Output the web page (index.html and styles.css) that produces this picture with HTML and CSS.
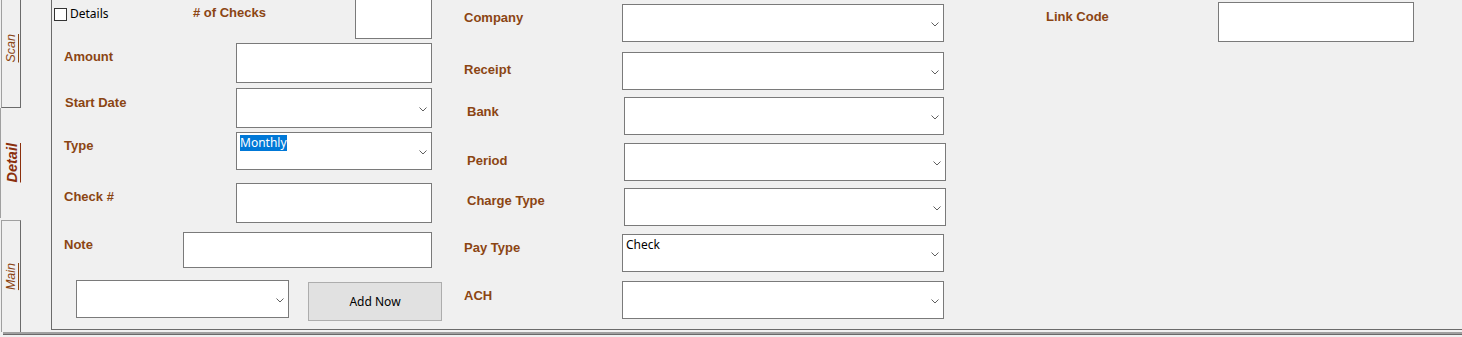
FILE: index.html
```html
<!DOCTYPE html>
<html>
<head>
<meta charset="utf-8">
<link rel="stylesheet" href="styles.css">
</head>
<body>
<div class="root">
  <div class="tabctl">
    <div class="tabs">
      <div class="tab tab-scan"><span class="tab-text">Scan</span></div>
      <div class="tab tab-sel"><span class="tab-text tab-text-sel">Detail</span></div>
      <div class="tab tab-main"><span class="tab-text">Main</span></div>
    </div>
    <div class="page">
      <div class="frame">
        <div class="col col-left">
          <div class="row r1">
            <label class="chk"><span class="chk-box"></span><span class="chk-text">Details</span></label>
            <span class="lbl lbl-checks"># of Checks</span>
            <div class="tb tb-checks"></div>
          </div>
          <div class="row r2">
            <span class="lbl l-amount">Amount</span>
            <div class="tb tb-left"></div>
          </div>
          <div class="row r3">
            <span class="lbl l-start">Start Date</span>
            <div class="cb cb-left h40"><span class="cb-text"></span><svg class="arrow" width="8" height="5" viewBox="0 0 8 5"><path d="M0.5 0.5 L4 4 L7.5 0.5" fill="none" stroke="#606060" stroke-width="1"/></svg></div>
          </div>
          <div class="row r4">
            <span class="lbl l-type">Type</span>
            <div class="cb cb-left h38"><span class="cb-text"><span class="sel-text">Monthly</span></span><svg class="arrow" width="8" height="5" viewBox="0 0 8 5"><path d="M0.5 0.5 L4 4 L7.5 0.5" fill="none" stroke="#606060" stroke-width="1"/></svg></div>
          </div>
          <div class="row r5">
            <span class="lbl l-check">Check #</span>
            <div class="tb tb-left"></div>
          </div>
          <div class="row r6">
            <span class="lbl l-note">Note</span>
            <div class="tb tb-note"></div>
          </div>
          <div class="row r7">
            <div class="cb cb-bottom"><span class="cb-text"></span><svg class="arrow" width="8" height="5" viewBox="0 0 8 5"><path d="M0.5 0.5 L4 4 L7.5 0.5" fill="none" stroke="#606060" stroke-width="1"/></svg></div>
            <button class="btn">Add Now</button>
          </div>
        </div>
        <div class="col col-mid">
          <div class="row m1">
            <span class="lbl ml9 mt5">Company</span>
            <div class="cb cb-mid"><span class="cb-text"></span><svg class="arrow" width="8" height="5" viewBox="0 0 8 5"><path d="M0.5 0.5 L4 4 L7.5 0.5" fill="none" stroke="#606060" stroke-width="1"/></svg></div>
          </div>
          <div class="row m2">
            <span class="lbl ml9 mt9">Receipt</span>
            <div class="cb cb-mid"><span class="cb-text"></span><svg class="arrow" width="8" height="5" viewBox="0 0 8 5"><path d="M0.5 0.5 L4 4 L7.5 0.5" fill="none" stroke="#606060" stroke-width="1"/></svg></div>
          </div>
          <div class="row m3">
            <span class="lbl ml12 mt6">Bank</span>
            <div class="cb cb-mid cb-narrow"><span class="cb-text"></span><svg class="arrow" width="8" height="5" viewBox="0 0 8 5"><path d="M0.5 0.5 L4 4 L7.5 0.5" fill="none" stroke="#606060" stroke-width="1"/></svg></div>
          </div>
          <div class="row m4">
            <span class="lbl ml12 mt9">Period</span>
            <div class="cb cb-mid"><span class="cb-text"></span><svg class="arrow" width="8" height="5" viewBox="0 0 8 5"><path d="M0.5 0.5 L4 4 L7.5 0.5" fill="none" stroke="#606060" stroke-width="1"/></svg></div>
          </div>
          <div class="row m5">
            <span class="lbl ml12 mt4">Charge Type</span>
            <div class="cb cb-mid"><span class="cb-text"></span><svg class="arrow" width="8" height="5" viewBox="0 0 8 5"><path d="M0.5 0.5 L4 4 L7.5 0.5" fill="none" stroke="#606060" stroke-width="1"/></svg></div>
          </div>
          <div class="row m6">
            <span class="lbl ml9 mt5">Pay Type</span>
            <div class="cb cb-mid"><span class="cb-text">Check</span><svg class="arrow" width="8" height="5" viewBox="0 0 8 5"><path d="M0.5 0.5 L4 4 L7.5 0.5" fill="none" stroke="#606060" stroke-width="1"/></svg></div>
          </div>
          <div class="row m7">
            <span class="lbl ml9 mt6">ACH</span>
            <div class="cb cb-mid h39"><span class="cb-text"></span><svg class="arrow" width="8" height="5" viewBox="0 0 8 5"><path d="M0.5 0.5 L4 4 L7.5 0.5" fill="none" stroke="#606060" stroke-width="1"/></svg></div>
          </div>
        </div>
        <div class="col col-right">
          <div class="row">
            <span class="lbl l-link">Link Code</span>
            <div class="tb tb-left"></div>
          </div>
        </div>
      </div>
    </div>
  </div>
  <div class="edge"></div>
</div>
</body>
</html>
```

FILE: styles.css
```css
html, body {
  margin: 0;
  padding: 0;
}
body {
  background: #f0f0f0;
  width: 1462px;
  height: 337px;
  overflow: hidden;
  font-family: "Liberation Sans", Arial, sans-serif;
}
.root {
  height: 337px;
  display: flex;
  flex-direction: column;
}
.tabctl {
  display: flex;
  height: 332px;
  flex: none;
}
.tabs {
  width: 21px;
  flex: none;
  display: flex;
  flex-direction: column;
}
.tab {
  box-sizing: border-box;
  flex: none;
  display: flex;
  align-items: center;
  justify-content: center;
}
.tab-scan {
  margin-top: -11px;
  margin-left: 1px;
  width: 20px;
  height: 119px;
  border-left: 1px solid #a0a0a0;
  border-right: 1px solid #6b6b6b;
  border-bottom: 1px solid #6b6b6b;
}
.tab-sel {
  width: 21px;
  height: 110px;
  border-left: 1px solid #a0a0a0;
  background: #f0f0f0;
}
.tab-main {
  margin-top: 2px;
  margin-left: 1px;
  width: 20px;
  height: 112px;
  border-top: 1px solid #a0a0a0;
  border-left: 1px solid #a0a0a0;
  border-right: 1px solid #6b6b6b;
}
.tab-text {
  writing-mode: vertical-rl;
  transform: rotate(180deg);
  font-style: italic;
  text-decoration: underline;
  color: #8b4513;
  font-size: 12.5px;
  line-height: 14px;
}
.tab-text-sel {
  font-weight: bold;
  font-size: 14.5px;
  color: #8b2f0c;
  margin-left: 2px;
}
.page {
  flex: 1;
  padding-left: 30px;
}
.frame {
  height: 329px;
  border-left: 1px solid #6b6b6b;
  border-bottom: 1px solid #6b6b6b;
  display: flex;
}
.col {
  flex: none;
  display: flex;
  flex-direction: column;
}
.col-left {
  width: 403px;
  margin-top: -3px;
}
.col-mid {
  width: 575px;
  margin-top: 4px;
}
.col-right {
  flex: 1;
  margin-top: 2px;
}
.row {
  display: flex;
  align-items: flex-start;
  flex: none;
}
.lbl {
  flex: none;
  box-sizing: border-box;
  font-size: 13px;
  line-height: 17px;
  font-weight: bold;
  color: #8b4513;
  white-space: nowrap;
}
.tb, .cb {
  box-sizing: border-box;
  flex: none;
  border: 1px solid #7a7a7a;
  background: #fff;
}
.cb {
  display: flex;
  align-items: center;
  padding: 0 4px 0 1px;
  font-family: "Noto Sans", "Open Sans", sans-serif;
  font-size: 12px;
  color: #000;
}
.cb-text {
  flex: 1;
  align-self: flex-start;
  margin-top: 2px;
  margin-left: 2px;
  line-height: 16px;
  white-space: nowrap;
}
.sel-text {
  display: inline-block;
  background: #0078d7;
  color: #fff;
  line-height: 16px;
}
.arrow {
  flex: none;
  display: block;
  margin-top: 2px;
}
/* left column */
.r1 { height: 46px; }
.r2 { height: 45px; }
.r3 { height: 44px; }
.r4 { height: 51px; }
.r5 { height: 49px; }
.r6 { height: 48px; }
.r7 { height: 40px; }
.chk {
  flex: none;
  width: 139px;
  margin-left: 2px;
  margin-top: 9px;
  display: flex;
  align-items: flex-start;
  font-family: "Noto Sans", "Open Sans", sans-serif;
  font-size: 12px;
  line-height: 16px;
  color: #000;
}
.chk-box {
  width: 13px;
  height: 13px;
  box-sizing: border-box;
  border: 1px solid #333;
  background: #fff;
  margin-top: 2px;
  flex: none;
}
.chk-text {
  margin-left: 3px;
}
.lbl-checks {
  width: 162px;
  margin-top: 7px;
}
.tb-checks {
  width: 77px;
  height: 42px;
}
.l-amount { margin-left: 12px; width: 172px; margin-top: 5px; }
.l-start { margin-left: 13px; width: 171px; margin-top: 6px; }
.l-type { margin-left: 12px; width: 172px; margin-top: 5px; }
.l-check { margin-left: 12px; width: 172px; margin-top: 5px; }
.l-note { margin-left: 12px; width: 119px; margin-top: 4px; }
.tb-left { width: 196px; height: 40px; }
.cb-left { width: 196px; }
.h40 { height: 40px; }
.h38 { height: 38px; }
.h39 { height: 39px; }
.tb-note { width: 249px; height: 36px; }
.cb-bottom {
  width: 213px;
  height: 38px;
  margin-left: 24px;
}
.btn {
  flex: none;
  box-sizing: border-box;
  width: 134px;
  height: 39px;
  margin-left: 19px;
  margin-top: 2px;
  border: 1px solid #adadad;
  background: #e1e1e1;
  font-family: "Noto Sans", "Open Sans", sans-serif;
  font-size: 12px;
  color: #000;
  padding: 0;
}
/* middle column */
.m1 { height: 48px; }
.m2 { height: 45px; }
.m3 { height: 46px; }
.m4 { height: 45px; }
.m5 { height: 46px; }
.m6 { height: 47px; }
.m7 { height: 40px; }
.ml9 { margin-left: 9px; width: 158px; }
.ml12 { margin-left: 12px; width: 157px; }
.mt4 { margin-top: 4px; }
.mt5 { margin-top: 5px; }
.mt6 { margin-top: 6px; }
.mt9 { margin-top: 9px; }
.cb-mid { width: 322px; height: 38px; }
.cb-narrow { width: 320px; }
/* right column */
.l-link { margin-left: 16px; width: 172px; margin-top: 6px; }
.edge {
  flex: none;
  margin-left: 3px;
  height: 1px;
  border-top: 2px solid #a0a0a0;
  background: #696969;
}
```
